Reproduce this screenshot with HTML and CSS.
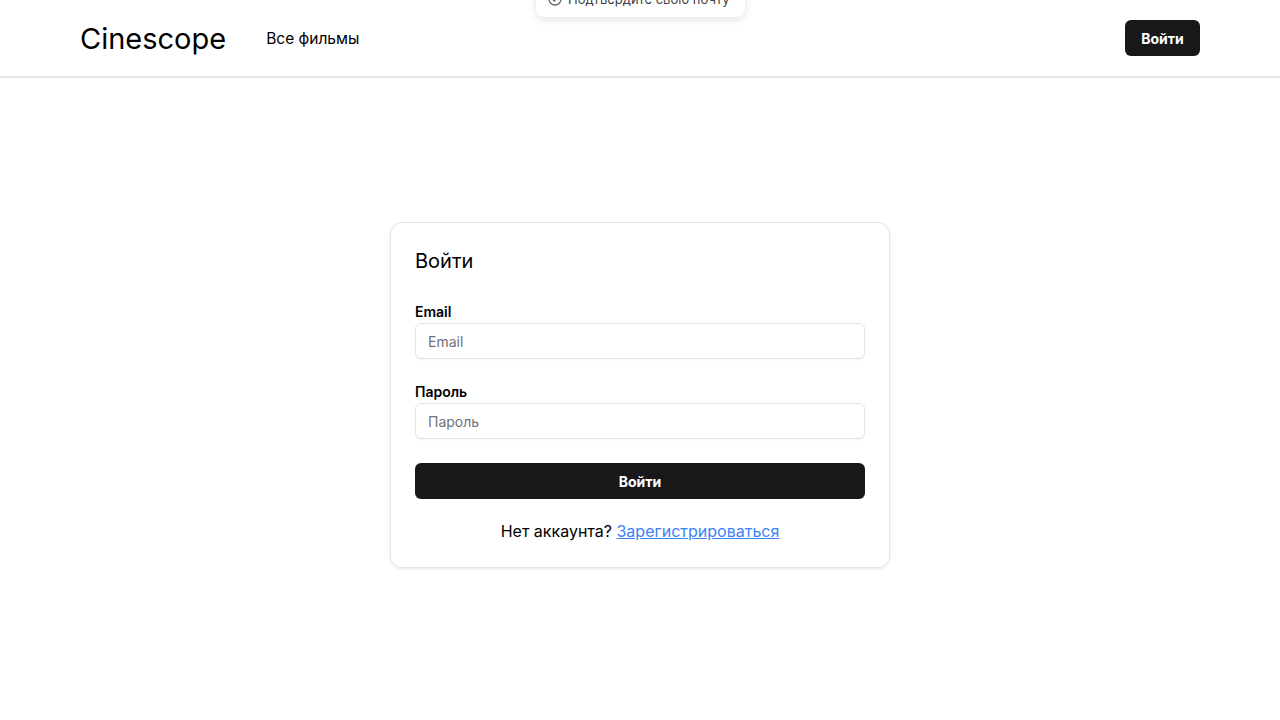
FILE: index.html
```html
<!DOCTYPE html>
<html lang="ru">
<head>
<meta charset="utf-8">
<title>Cinescope</title>
<link rel="stylesheet" href="styles.css">
</head>
<body>
<div class="toast">
  <svg class="toast-icon" width="14" height="14" viewBox="0 0 14 14"><circle cx="7" cy="7" r="6" fill="none" stroke="#666" stroke-width="1.3"/><path d="M4.5 7.2l1.8 1.8L9.6 5.4" fill="none" stroke="#666" stroke-width="1.3" stroke-linecap="round" stroke-linejoin="round"/></svg>
  <span class="toast-text">Подтвердите свою почту</span>
</div>
<header class="header">
  <div class="header-inner">
    <div class="header-left">
      <a class="logo" href="#">Cinescope</a>
      <a class="nav-link" href="#">Все фильмы</a>
    </div>
    <button class="btn btn-small">Войти</button>
  </div>
</header>
<main class="main">
  <div class="card">
    <h1 class="card-title">Войти</h1>
    <form class="form">
      <div class="field">
        <label class="label" for="email">Email</label>
        <input class="input" id="email" type="email" placeholder="Email">
      </div>
      <div class="field">
        <label class="label" for="pass">Пароль</label>
        <input class="input" id="pass" type="password" placeholder="Пароль">
      </div>
      <button class="btn btn-full" type="button">Войти</button>
    </form>
    <p class="footer-text">Нет аккаунта? <a class="link" href="#">Зарегистрироваться</a></p>
  </div>
</main>
</body>
</html>
```
FILE: styles.css
```css
* { box-sizing: border-box; }
html, body { margin: 0; padding: 0; }
body {
  font-family: Inter, "Noto Sans", sans-serif;
  color: #09090b;
  background: #fff;
  width: 1280px;
  height: 720px;
  overflow: hidden;
  position: relative;
}
a { color: inherit; text-decoration: none; }

.toast {
  position: absolute;
  top: -19px;
  left: 536px;
  width: 209px;
  height: 36px;
  background: #fff;
  border-radius: 8px;
  box-shadow: 0 2px 8px rgba(0,0,0,0.12);
  display: flex;
  align-items: center;
  gap: 6px;
  padding: 0 12px;
  font-size: 13px;
  color: #3f3f46;
  z-index: 10;
  white-space: nowrap;
}
.toast-icon { flex: none; }
.toast-text { white-space: nowrap; }

.header {
  height: 78px;
  border-bottom: 2px solid #e5e5e5;
}
.header-inner {
  width: 1120px;
  margin: 0 auto;
  height: 76px;
  display: flex;
  align-items: center;
  justify-content: space-between;
}
.header-left { display: flex; align-items: center; gap: 40px; }
.logo { font-size: 29px; font-weight: 400; color: #000; }
.nav-link { font-size: 15.5px; color: #000; }

.btn {
  background: #18181b;
  color: #fff;
  border: none;
  border-radius: 6px;
  font-family: inherit;
  font-weight: 700;
  font-size: 14px;
  height: 36px;
  cursor: pointer;
}
.btn-small { width: 75px; }
.btn-full { width: 100%; margin-top: 24px; }

.main {
  height: 642px;
  display: flex;
  justify-content: center;
  align-items: flex-start;
  padding-top: 144px;
}
.card {
  width: 500px;
  border: 1px solid #e4e4e7;
  border-radius: 12px;
  box-shadow: 0 1px 3px rgba(0,0,0,0.1);
  padding: 24px;
}
.card-title {
  margin: 0;
  font-size: 20px;
  font-weight: 400;
  line-height: 28px;
  color: #000;
}
.form { margin-top: 27px; display: flex; flex-direction: column; }
.field { display: flex; flex-direction: column; gap: 1px; }
.field + .field { margin-top: 23px; }
.label { font-size: 14px; font-weight: 600; line-height: 20px; color: #000; }
.input {
  height: 36px;
  border: 1px solid #e4e4e7;
  border-radius: 6px;
  padding: 0 12px;
  font-family: inherit;
  font-size: 14px;
  color: #09090b;
  box-shadow: 0 1px 2px rgba(0,0,0,0.04);
  outline: none;
}
.input::placeholder { color: #71717a; }
.footer-text {
  margin: 20px 0 0;
  text-align: center;
  font-size: 16px;
  line-height: 24px;
  color: #000;
}
.link { color: #3b82f6; text-decoration: underline; }
```
